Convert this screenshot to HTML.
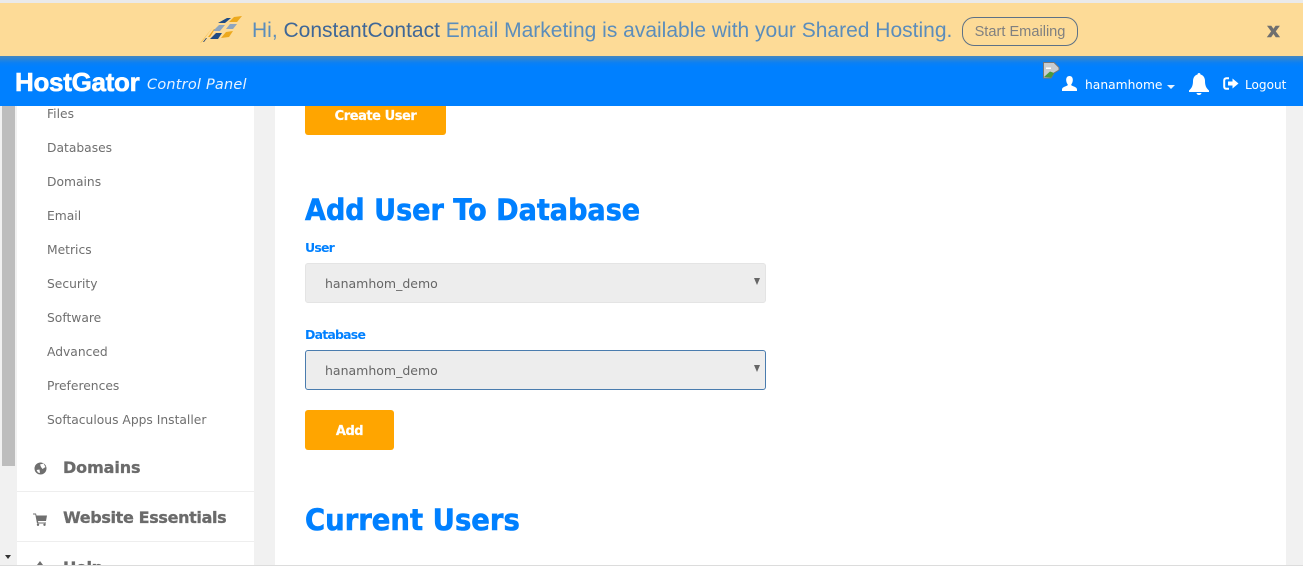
<!DOCTYPE html>
<html><head><meta charset="utf-8"><style>
html,body{margin:0;padding:0;width:1303px;height:570px;overflow:hidden;background:#fff}
*{box-sizing:border-box}
.a{position:absolute;white-space:nowrap}
#root{position:absolute;left:0;top:0;width:1303px;height:565px;overflow:hidden;background:#f1f1f1;font-family:"Liberation Sans",sans-serif}
.side{font-family:"DejaVu Sans",sans-serif;font-size:12.3px;color:#6f6f6f;left:47px;line-height:16px}
.hd{font-family:"DejaVu Sans",sans-serif;font-weight:700;font-size:16px;color:#6b6b6b;left:63px;line-height:20px;letter-spacing:-.35px;-webkit-text-stroke:.3px #6b6b6b}
.h2{font-family:"DejaVu Sans",sans-serif;font-weight:700;font-size:29px;color:#0080ff;left:305px;line-height:36px;transform-origin:0 0;-webkit-text-stroke:.6px #0080ff}
.lb{font-family:"DejaVu Sans",sans-serif;font-weight:700;font-size:12.5px;color:#0080ff;left:305px;line-height:16px;letter-spacing:-.8px}
.sel{left:305px;width:461px;height:40px;background:#ededed;border-radius:3px}
.sel span{position:absolute;left:19px;top:12px;font-family:"DejaVu Sans",sans-serif;font-size:12.5px;line-height:16px;color:#666}
.sel i{position:absolute;right:5px;top:15px;width:0;height:0;border-left:3px solid transparent;border-right:3px solid transparent;border-top:7px solid #666}
.btn{background:#ffa500;color:#fff;font-family:"DejaVu Sans",sans-serif;font-weight:700;font-size:13px;text-align:center;border-radius:3px;letter-spacing:-.45px;-webkit-text-stroke:.2px #fff}
</style></head><body><div id="root">

<div class="a" style="left:0;top:0;width:1303px;height:3px;background:#eaeaea"></div>
<div class="a" style="left:0;top:3px;width:1303px;height:53px;background:#fddb97"></div>

<svg class="a" style="left:196px;top:14px" width="48" height="32" viewBox="0 0 48 32">
<path d="M4 29L17 13L6 28Z" fill="#f5c25a"/>
<path d="M7 28L10 24L11 24L8 28Z" fill="#20406f"/>
<path d="M12 23L18 15L19 15L14 23Z" fill="#eaa520"/>
<path d="M22 9L31 4L35 4L29 9Z" fill="#1f4b84"/>
<path d="M33 8L38 3L46 2L41 8Z" fill="#eda91d"/>
<path d="M17 17L23 11L29 11L24 17Z" fill="#8ea5bf"/>
<path d="M30 15L34 10L41 10L37 15Z" fill="#8ea5bf"/>
<path d="M14 25L20 19L26 19L22 25Z" fill="#1f4b84"/>
<path d="M25 24L30 18L37 17L33 23Z" fill="#eda91d"/>
</svg>

<div class="a" style="left:252px;top:18px;font-size:21px;line-height:26px;color:#5b8dbb">Hi, <span style="color:#3f6797">ConstantContact</span> Email Marketing is available with your Shared Hosting.</div>
<div class="a" style="left:962px;top:17px;width:116px;height:29px;border:1px solid #5d7186;border-radius:12px;color:#808080;font-size:14.6px;line-height:29px;text-align:center">Start Emailing</div>
<div class="a" style="left:1267px;top:18px;font-family:'DejaVu Sans',sans-serif;font-weight:700;font-size:20px;line-height:24px;color:#6f6f6f;-webkit-text-stroke:.5px #6f6f6f">x</div>

<div class="a" style="left:0;top:56px;width:1303px;height:50px;background:linear-gradient(#4488c0 0,#0a80f5 7px,#0080ff 11px)"></div>
<div class="a" style="left:15px;top:67px;font-family:'Liberation Sans',sans-serif;font-weight:700;font-size:26px;line-height:30px;color:#fff;letter-spacing:-.3px;-webkit-text-stroke:.6px #fff">HostGator</div>
<div class="a" style="left:147px;top:76px;font-family:'DejaVu Sans',sans-serif;font-style:italic;font-size:14.5px;line-height:18px;color:#e8f3ff;letter-spacing:.2px">Control Panel</div>

<svg class="a" style="left:1043px;top:62px" width="17" height="17" viewBox="0 0 17 17">
<path d="M0.500 0.500H11L16 5.500V8L11 11L8 16H.5Z" fill="#c8ccd0" stroke="#777"/>
<path d="M1 15L7 9.500L11 11L8 15.500Z" fill="#4a9a3c"/>
<path d="M3 5.500H8V7H3Z" fill="#fff"/>
</svg>
<svg class="a" style="left:1062px;top:76px" width="15" height="15" viewBox="0 0 15 15">
<path d="M7.500 0C10 0 11 2 10.800 4.500C10.600 6.500 9.800 7.800 9.200 8.500L9.500 9.500C11 10.300 15 11 15 13.500V15H0V13.500C0 11 4 10.300 5.500 9.500L5.800 8.500C5.200 7.800 4.400 6.500 4.200 4.500C4 2 5 0 7.500 0Z" fill="#fff"/>
</svg>
<div class="a" style="left:1085px;top:77px;font-family:'DejaVu Sans',sans-serif;font-size:12.3px;line-height:16px;color:#fff">hanamhome</div>
<div class="a" style="left:1167px;top:85px;width:0;height:0;border-left:4px solid transparent;border-right:4px solid transparent;border-top:4px solid #e8f3ff"></div>
<svg class="a" style="left:1189px;top:73px" width="20" height="22" viewBox="0 0 20 22">
<path d="M10 0C11 0 11.500 .7 11.500 1.500C14.500 2.300 16 5 16 8C16 12 17 15 20 17.500V19H0V17.500C3 15 4 12 4 8C4 5 5.500 2.300 8.500 1.500C8.500 .7 9 0 10 0Z M7.500 20H12.500C12.300 21.300 11.300 22 10 22C8.700 22 7.700 21.300 7.500 20Z" fill="#fff"/>
</svg>
<svg class="a" style="left:1223px;top:77px" width="16" height="13" viewBox="0 0 16 13">
<path d="M6 1.200H3.500C2 1.200 1.200 2 1.200 3.500V9.500C1.200 11 2 11.800 3.500 11.800H6" fill="none" stroke="#fff" stroke-width="2"/>
<path d="M5 4.500H9.500V1.500L15.500 6.500L9.500 11.500V8.500H5Z" fill="#fff"/>
</svg>
<div class="a" style="left:1245px;top:77px;font-family:'DejaVu Sans',sans-serif;font-size:12.1px;line-height:16px;color:#fff">Logout</div>

<div class="a" style="left:2px;top:106px;width:13px;height:360px;background:#bdbdbd"></div>
<div class="a" style="left:5px;top:555px;width:0;height:0;border-left:3.500px solid transparent;border-right:3.500px solid transparent;border-top:4px solid #333"></div>

<div class="a" style="left:17px;top:106px;width:237px;height:459px;background:#fff"></div>
<div class="a side" style="top:106px">Files</div>
<div class="a side" style="top:140px">Databases</div>
<div class="a side" style="top:174px">Domains</div>
<div class="a side" style="top:208px">Email</div>
<div class="a side" style="top:242px">Metrics</div>
<div class="a side" style="top:276px">Security</div>
<div class="a side" style="top:310px">Software</div>
<div class="a side" style="top:344px">Advanced</div>
<div class="a side" style="top:378px">Preferences</div>
<div class="a side" style="top:412px">Softaculous Apps Installer</div>

<svg class="a" style="left:34px;top:462px" width="13" height="13" viewBox="0 0 13 13">
<circle cx="6.500" cy="6.500" r="6" fill="#6f6f6f"/>
<path d="M6 2.500L9.500 1.500L11.500 5L8.500 7L7 5ZM2.500 8L5.500 7.500L6 11L4 10.500Z" fill="#fff"/>
</svg>
<div class="a hd" style="top:458px;letter-spacing:-.1px">Domains</div>
<div class="a" style="left:17px;top:491px;width:237px;height:1px;background:#eee"></div>
<svg class="a" style="left:33px;top:513px" width="14" height="13" viewBox="0 0 14 13">
<path d="M0 .5H3L3.500 2.500H14L13 8H5L5.300 9.500H13V10.500H4L2.300 1.500H0Z" fill="#6f6f6f"/>
<circle cx="5" cy="11.800" r="1.200" fill="#6f6f6f"/><circle cx="11.500" cy="11.800" r="1.200" fill="#6f6f6f"/>
</svg>
<div class="a hd" style="top:508px">Website Essentials</div>
<div class="a" style="left:17px;top:541px;width:237px;height:1px;background:#eee"></div>
<svg class="a" style="left:36px;top:561px" width="8" height="4" viewBox="0 0 8 4"><path d="M4 0L7 4H1Z" fill="#6f6f6f"/></svg>
<div class="a hd" style="top:558px">Help</div>

<div class="a" style="left:275px;top:106px;width:1011px;height:459px;background:#fff"></div>
<div class="a" style="left:305px;top:106px;width:141px;height:29px;background:#ffa500;border-radius:0 0 3px 3px"></div>
<div class="a btn" style="left:305px;top:98px;width:141px;height:37px;line-height:37px;background:none">Create User</div>
<div class="a h2" style="top:192px;transform:scaleX(.933)">Add User To Database</div>
<div class="a lb" style="top:240px">User</div>
<div class="a sel" style="top:263px;border:1px solid #e4e4e4"><span>hanamhom_demo</span><i style="top:14px"></i></div>
<div class="a lb" style="top:327px">Database</div>
<div class="a sel" style="top:350px;border:1px solid #4a7cae"><span>hanamhom_demo</span><i style="top:14px"></i></div>
<div class="a btn" style="left:305px;top:410px;width:89px;height:40px;line-height:42px;padding-top:1px">Add</div>
<div class="a h2" style="top:502px;transform:scaleX(.947)">Current Users</div>

</div>
<div class="a" style="left:0;top:565px;width:1303px;height:1px;background:#dcdcdc"></div>
</body></html>
